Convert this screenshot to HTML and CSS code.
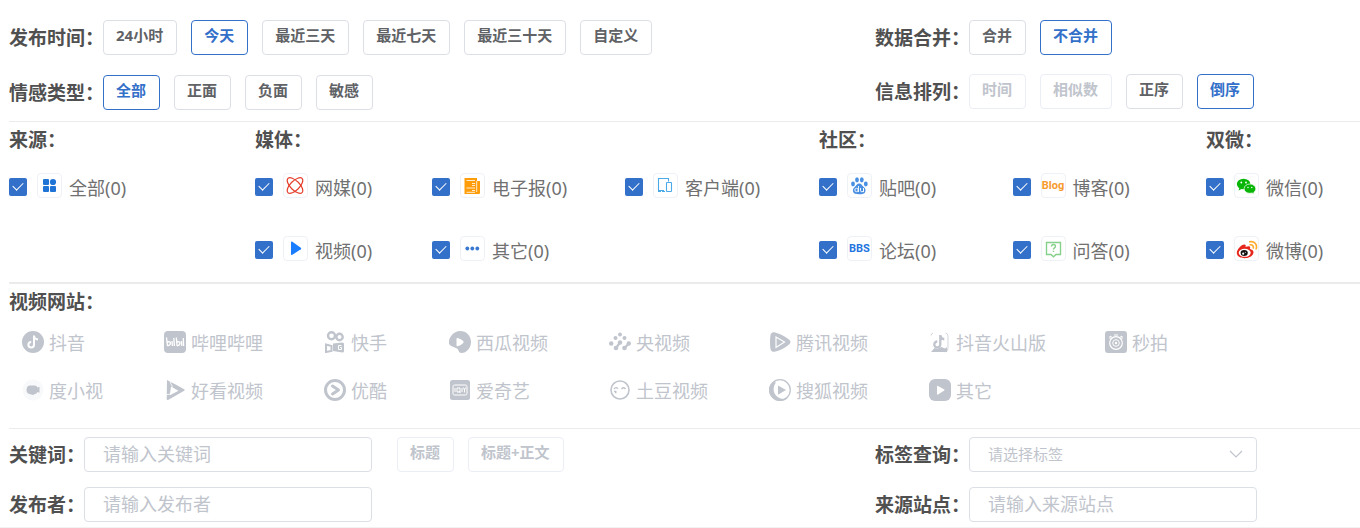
FILE: index.html
```html
<!DOCTYPE html>
<html lang="zh-CN">
<head>
  <meta charset="utf-8">
  <title>信息筛选</title>
  <link rel="stylesheet" href="styles.css">
</head>
<body>
  <form class="filter">

    <div class="section top">
      <div class="col col-left">
        <div class="row">
          <span class="title">发布时间：</span>
          <div class="btns">
            <button type="button" class="btn">24小时</button>
            <button type="button" class="btn active">今天</button>
            <button type="button" class="btn">最近三天</button>
            <button type="button" class="btn">最近七天</button>
            <button type="button" class="btn">最近三十天</button>
            <button type="button" class="btn">自定义</button>
          </div>
        </div>
        <div class="row">
          <span class="title">情感类型：</span>
          <div class="btns">
            <button type="button" class="btn active">全部</button>
            <button type="button" class="btn">正面</button>
            <button type="button" class="btn">负面</button>
            <button type="button" class="btn">敏感</button>
          </div>
        </div>
      </div>
      <div class="col col-right">
        <div class="row">
          <span class="title">数据合并：</span>
          <div class="btns">
            <button type="button" class="btn">合并</button>
            <button type="button" class="btn active">不合并</button>
          </div>
        </div>
        <div class="row">
          <span class="title">信息排列：</span>
          <div class="btns">
            <button type="button" class="btn" disabled>时间</button>
            <button type="button" class="btn" disabled>相似数</button>
            <button type="button" class="btn">正序</button>
            <button type="button" class="btn active">倒序</button>
          </div>
        </div>
      </div>
    </div>

    <div class="section sources">
      <div class="group">
        <h3 class="title">来源：</h3>
        <div class="items">
          <label class="item"><input type="checkbox" checked>
            <svg class="icon" viewBox="1 1 23 23"><g fill="#1f74d6"><rect x="6" y="6" width="6" height="6" rx="1"/><circle cx="16" cy="9" r="3.1"/><rect x="6" y="13" width="6" height="6" rx="1"/><rect x="13" y="13" width="6" height="6" rx="1"/></g></svg>
            <span>全部(0)</span></label>
        </div>
      </div>

      <div class="group media">
        <h3 class="title">媒体：</h3>
        <div class="items">
          <label class="item"><input type="checkbox" checked>
            <svg class="icon" viewBox="1 1 23 23"><g fill="none" stroke="#e6402f" stroke-width="1.2"><ellipse cx="12" cy="12.500" rx="10" ry="4.600" transform="rotate(45 12 12.500)"/><ellipse cx="12" cy="12.500" rx="10" ry="4.600" transform="rotate(-45 12 12.500)"/></g></svg>
            <span>网媒(0)</span></label>
          <label class="item"><input type="checkbox" checked>
            <svg class="icon" viewBox="1 1 23 23"><path fill="#ff9c0a" d="M4.500 5H17v3h3v12q0 1-1 1H4.500z"/><g fill="none" stroke="#fff" stroke-width=".8"><path d="M6.500 7.500h8.500M12 10.500h3M12 12.500h3M6.500 15h8.500M12 17.500h3M6.500 19.300h8.500M16.700 8v11"/></g></svg>
            <span>电子报(0)</span></label>
          <label class="item"><input type="checkbox" checked>
            <svg class="icon" viewBox="1 1 23 23"><g fill="none" stroke="#4aa9e6" stroke-width="1.1"><path d="M15.500 8.500V5.500H5.500v12H11"/><rect x="13.500" y="9.500" width="5" height="9" rx=".6"/><path d="M5 18.500h3M9 18.500h3"/></g></svg>
            <span>客户端(0)</span></label>
          <label class="item"><input type="checkbox" checked>
            <svg class="icon" viewBox="1 1 23 23"><path fill="#1a7dff" d="M8 6.500q0-1.500 1.400-.8l8.400 6q1 .8 0 1.600l-8.400 5.500Q8 19.500 8 18z"/></svg>
            <span>视频(0)</span></label>
          <label class="item"><input type="checkbox" checked>
            <svg class="icon" viewBox="1 1 23 23"><g fill="#3a78d0"><circle cx="7.300" cy="12.500" r="1.900"/><circle cx="12.300" cy="12.500" r="1.900"/><circle cx="17.300" cy="12.500" r="1.900"/></g></svg>
            <span>其它(0)</span></label>
        </div>
      </div>

      <div class="group community">
        <h3 class="title">社区：</h3>
        <div class="items">
          <label class="item"><input type="checkbox" checked>
            <svg class="icon" viewBox="1 1 23 23"><g fill="#4a90e2"><ellipse cx="6" cy="11" rx="1.900" ry="2.400"/><ellipse cx="10" cy="6.800" rx="1.900" ry="2.600"/><ellipse cx="14.800" cy="6.800" rx="1.900" ry="2.600"/><ellipse cx="18.800" cy="11" rx="1.900" ry="2.400"/><path d="M12.200 10.500c2.200 0 3 2.200 4.600 3.600 1.900 1.700 2 3.400 1.400 4.900-.8 2-2.800 2.200-6 2.200s-5.300-.3-6-2.200c-.6-1.500-.4-3.200 1.500-4.900 1.500-1.400 2.300-3.600 4.500-3.600z"/></g><g fill="none" stroke="#fff" stroke-width=".9"><circle cx="9.500" cy="17" r="1.700"/><path d="M11.500 13v6M13.500 15v2.500q0 1.300 1.400 1.300t1.600-1.300V15v4"/></g></svg>
            <span>贴吧(0)</span></label>
          <label class="item"><input type="checkbox" checked>
            <span class="icon word blog">Blog</span>
            <span>博客(0)</span></label>
          <label class="item"><input type="checkbox" checked>
            <span class="icon word bbs">BBS</span>
            <span>论坛(0)</span></label>
          <label class="item"><input type="checkbox" checked>
            <svg class="icon" viewBox="1 1 23 23"><g fill="none" stroke="#85d08a" stroke-width="1.400"><path d="M5.500 6.500h14v12H15l-2.500 2.200-2.500-2.200H5.500z"/><path d="M10.500 10.500q0-2 2-2t2 1.800q0 1-1 1.600-1 .6-1 1.600M12.500 14.700v1.400"/></g></svg>
            <span>问答(0)</span></label>
        </div>
      </div>

      <div class="group wechat">
        <h3 class="title">双微：</h3>
        <div class="items">
          <label class="item"><input type="checkbox" checked>
            <svg class="icon" viewBox="1 1 23 23"><path fill="#09b607" d="M4 13l1.300 2.200-.8 2.200 3-1.400z"/><ellipse cx="9.600" cy="11" rx="6.800" ry="5.200" fill="#09b607"/><path fill="#09b607" stroke="#fff" stroke-width=".7" d="M15.900 11c3.200 0 5.900 2.100 5.900 4.800 0 1.500-.8 2.700-2 3.500l.4 1.900-2-1.200c-.7.200-1.500.3-2.300.3-3.200 0-5.800-1.900-5.800-4.500s2.600-4.800 5.800-4.800z"/><g fill="#fff"><circle cx="7.300" cy="9.500" r=".9"/><circle cx="12" cy="9.500" r=".9"/><circle cx="14" cy="14.500" r=".7"/><circle cx="17.800" cy="14.500" r=".7"/></g></svg>
            <span>微信(0)</span></label>
          <label class="item"><input type="checkbox" checked>
            <svg class="icon" viewBox="1 1 23 23"><path fill="#e6251c" d="M10.600 8.600c1.500.2 1.200 1.500.9 2.400 2-.8 4.500-1.200 4.700.5.1.7-.3 1.300-.2 1.500 1.600.4 3.500 1.300 3.500 3.300 0 3.200-4.200 5.900-9 5.900-4.200 0-7.700-2.200-7.700-5.200 0-3.400 4.900-8.800 7.800-8.400z"/><ellipse cx="10.700" cy="16.800" rx="6" ry="4" fill="#fff"/><ellipse cx="10.200" cy="17" rx="3.600" ry="3.100" fill="#111"/><circle cx="9.200" cy="17.700" r="1.100" fill="#fff"/><circle cx="11.300" cy="16.200" r=".5" fill="#fff"/><g fill="none" stroke="#ffa927" stroke-width="1.600" stroke-linecap="round"><path d="M15.700 5.800c4.500-.9 7.800 2.500 6.500 7"/><path d="M16.200 8.800c2.200-.3 3.500 1.100 3.100 3.200"/></g></svg>
            <span>微博(0)</span></label>
        </div>
      </div>
    </div>

    <div class="section video">
      <h3 class="title">视频网站：</h3>
      <div class="sites">
        <button type="button" class="site" disabled><svg viewBox="0 0 22 22"><circle cx="11" cy="11" r="11" fill="currentColor"/><path fill="none" stroke="#fff" stroke-width="2" d="M12 4.500v9.300a2.800 2.800 0 1 1-2.800-2.800M12 5q.4 3.200 4 3.600"/></svg>抖音</button>
        <button type="button" class="site" disabled><svg viewBox="0 0 22 22"><rect width="22" height="22" rx="4" fill="currentColor"/><g fill="none" stroke="#fff" stroke-width="1.300"><path d="M2.500 6.500l1 8.500M3.300 11q3.400-.8 3.200 1.200-.4 2.300-3 2.600M8 10l.4 5M9.800 7l.6 8M12.300 6.500l.8 8.500M13 11q3.200-.8 3 1.200-.3 2.300-2.900 2.600M17.500 10l.3 5M19.300 7l.3 8"/></g></svg>哔哩哔哩</button>
        <button type="button" class="site" disabled><svg viewBox="0 0 22 22"><g fill="none" stroke="currentColor"><circle cx="7.500" cy="4.700" r="3.500" stroke-width="2.400"/><circle cx="15.500" cy="6" r="3.200" stroke-width="2.400"/><path d="M2 13.500l5.500 1.500v5L2 21z" stroke-width="2"/></g><path fill="currentColor" d="M9 12.500l9.500-1q1.500 0 1.500 1.500v7q0 1.500-1.500 1.500L9 20z"/><path fill="none" stroke="#fff" d="M17.500 14.500h-3v4h3v-2h-1.500"/></svg>快手</button>
        <button type="button" class="site" disabled><svg viewBox="0 0 22 22"><path fill="currentColor" d="M11 0c6.500 0 11 4.800 11 11 0 6-4.400 11-9.500 11-3.200 0-2.500-3-4.500-4.500-2.600-1.800-7.200-2-8-5C-.8 7.500 4 0 11 0z"/><path fill="#fff" d="M7.500 8q0-1.200 1.200-.9 3.500.8 5.500 3 .9 1 0 2-2 2.300-5.500 3.100-1.200.2-1.200-1z"/></svg>西瓜视频</button>
        <button type="button" class="site" disabled><svg viewBox="0 0 22 22"><g fill="currentColor"><circle cx="11" cy="3.500" r="2"/><circle cx="6.500" cy="7" r="2"/><circle cx="15.500" cy="7" r="2"/><circle cx="2.200" cy="12.500" r="2.200"/><circle cx="11" cy="11.500" r="2.200"/><circle cx="19.800" cy="12.500" r="2.200"/><circle cx="7" cy="17" r="2.300"/><circle cx="15.500" cy="17" r="2.300"/></g><path stroke="currentColor" stroke-width="2.200" d="M11 11.500L7 17M19.800 12.500L15.500 17"/></svg>央视频</button>
        <button type="button" class="site" disabled><svg viewBox="0 0 22 22"><path fill="currentColor" d="M1.500 4Q2 .8 5.500 1.200 13 3 20 8.500q3 2.500 0 5Q13 19.500 5.500 20.800 2 21 1.500 18q-1-7 0-14z"/><path fill="none" stroke="#fff" stroke-width="1.200" d="M7 6v10.500l8.500-5.500z"/></svg>腾讯视频</button>
        <button type="button" class="site" disabled><svg viewBox="0 0 22 22"><path fill="currentColor" d="M2 21l3.500-4 3 1 4-2 3.500 1.500 2-1.500V21z"/><path fill="none" stroke="currentColor" stroke-width="2.300" d="M11.300 4v9.500a3 3 0 1 1-3-3M11.300 4.500q.5 3.500 4 3.800"/><path fill="none" stroke="currentColor" stroke-width=".7" d="M2 4.500Q2 2.500 4 2.200M16.500 2q2.500.3 2.500 3v12q0 3.500-2.500 4"/></svg>抖音火山版</button>
        <button type="button" class="site" disabled><svg viewBox="0 0 22 22"><rect width="22" height="22" rx="3" fill="currentColor"/><g fill="none" stroke="#fff"><circle cx="11" cy="12" r="6.300" stroke-width="1.200"/><circle cx="11" cy="12" r="3.300"/><path d="M5 8V5l2.500 1.500M17 8V5l-2.500 1.500M9 4h4"/></g><circle cx="11" cy="12" r="1.200" fill="#fff"/></svg>秒拍</button>
        <button type="button" class="site" disabled><svg viewBox="0 0 22 22"><circle cx="11" cy="11" r="10.500" fill="#f8f9fa"/><path fill="currentColor" d="M7.500 6.500h5q2.500 0 3 2l2-.7v6l-2-.8q-.8 2-3 2.200l-2 .8-2-.8Q4.500 15 4.500 11q0-4 3-4.500z"/></svg>度小视</button>
        <button type="button" class="site" disabled><svg viewBox="0 0 22 22"><path fill="currentColor" fill-rule="evenodd" d="M3 1q7 3.500 17.500 9.500.8.600-.3 1.300L4.500 20.800q-1.800.8-1.800-1zm4 6.500l-1.200 8.700 8.700-4.400z"/><path stroke="#fff" stroke-width=".8" d="M2 15.800l5-.8M6 2.800l2.500 5"/></svg>好看视频</button>
        <button type="button" class="site" disabled><svg viewBox="0 0 22 22"><circle cx="11" cy="11" r="9.500" fill="none" stroke="currentColor" stroke-width="3"/><path fill="none" stroke="currentColor" stroke-width="3" stroke-linecap="round" stroke-linejoin="round" d="M8.500 7l6 4-6 4"/></svg>优酷</button>
        <button type="button" class="site" disabled><svg viewBox="0 0 22 22"><rect x="1" y="1" width="20" height="20" rx="2.500" fill="currentColor"/><g fill="none" stroke="#fff"><rect x="4" y="6" width="14" height="10" rx="1.500"/><path d="M6 9v4M8 9h3v4H8zM10 12l1.500 2M13 9v4M14.500 8.500l1 2.500 1-2.500M15.500 11v2.500"/></g></svg>爱奇艺</button>
        <button type="button" class="site" disabled><svg viewBox="0 0 22 22"><g fill="none" stroke="currentColor"><circle cx="11" cy="11" r="9" stroke-width="1.600"/><path stroke-width="1.300" d="M5 10q1.800-2.500 4-.3M12.500 10q2-2.500 4 0M5 12.500h2.500M6 13.500h1.500"/></g></svg>土豆视频</button>
        <button type="button" class="site" disabled><svg viewBox="0 0 22 22"><circle cx="11" cy="11" r="10.300" fill="none" stroke="currentColor" stroke-width="1.300"/><path fill="currentColor" d="M4 3C1 5 0 8 0 11c0 6 5 11 11 11 3 0 6-1 8-3-4 1.500-8 1-11-1.500C4 14 3.500 8 7 3.500z"/><path fill="currentColor" d="M9 6.500l8 4.500-8 4.800z"/></svg>搜狐视频</button>
        <button type="button" class="site" disabled><svg viewBox="0 0 22 22"><rect width="22" height="22" rx="6" fill="currentColor"/><path fill="#fff" d="M8 7.500q0-1 1-.5l6.300 3.500q.7.500 0 1L9 15.500q-1 .5-1-.5z"/></svg>其它</button>
      </div>
    </div>

    <div class="section search">
      <div class="col">
        <div class="row">
          <label class="title short" for="keyword">关键词：</label>
          <input type="text" id="keyword" class="field" placeholder="请输入关键词">
          <div class="btns after-field">
            <button type="button" class="btn" disabled>标题</button>
            <button type="button" class="btn" disabled>标题+正文</button>
          </div>
        </div>
        <div class="row">
          <label class="title short" for="author">发布者：</label>
          <input type="text" id="author" class="field" placeholder="请输入发布者">
        </div>
      </div>
      <div class="col">
        <div class="row">
          <label class="title" for="tag">标签查询：</label>
          <div class="select">
            <select id="tag" class="field">
              <option>请选择标签</option>
            </select>
            <svg class="arrow" viewBox="0 0 14 8"><path d="M1 1l6 6 6-6" fill="none" stroke="#c0c4cc" stroke-width="1.200"/></svg>
          </div>
        </div>
        <div class="row">
          <label class="title" for="website">来源站点：</label>
          <input type="text" id="website" class="field" placeholder="请输入来源站点">
        </div>
      </div>
    </div>

  </form>
</body>
</html>
```
FILE: styles.css
```css
* {
  box-sizing: border-box;
}
body {
  margin: 0;
  background-color: #fff;
  color: #707070;
  font-family: "Noto Sans", "Noto Sans CJK SC", sans-serif;
  font-size: 18px;
}
button, input, select {
  font-family: inherit;
}
.filter {
  padding-left: 9px;
  border-bottom: 1px solid #f2f2f2;
}
.section {
  border-bottom: 1px solid #ebebeb;
}
.title {
  margin: 0;
  color: #505050;
  font-size: 19px;
  font-weight: bold;
  line-height: 34px;
  white-space: nowrap;
}
h3.title {
  height: 34px;
  line-height: 36px;
}

/* rows of buttons */
.top, .search {
  display: grid;
  grid-template-columns: 866fr 485fr;
}
.top {
  padding: 20px 0 11px;
}
.col {
  display: flex;
  flex-direction: column;
  gap: 15px;
}
.col-left {
  gap: 20px;
}
.col-right {
  gap: 19px;
}
.row {
  display: flex;
  align-items: center;
  height: 35px;
}
.row .title {
  flex: 0 0 94px;
  min-width: 0;
}
.row .short {
  flex-basis: 75px;
}
.btns {
  display: flex;
  gap: 14px;
}
.btn {
  height: 35px;
  padding: 0 13px 6px 12px;
  border: 1px solid #dcdfe6;
  border-radius: 4px;
  background-color: #fff;
  color: #606266;
  font-size: 15px;
  font-weight: bold;
  line-height: 20px;
  white-space: nowrap;
  cursor: pointer;
}
.btn.active {
  border-color: #3370c9;
  color: #3370c9;
}
.btn:disabled {
  border-color: #ebeef5;
  color: #c0c4cc;
  cursor: not-allowed;
}

/* sources */
.sources {
  display: grid;
  grid-template-columns: 246fr 564fr 387fr 154fr;
  border-bottom-width: 2px;
}
.items {
  display: grid;
}
.media .items {
  grid-template-columns: 177fr 193fr 194fr;
}
.community .items {
  grid-template-columns: 1fr 1fr;
}
.item {
  display: flex;
  align-items: center;
  height: 63px;
  padding-bottom: 2px;
  white-space: nowrap;
}
.item input {
  display: grid;
  place-items: center;
  appearance: none;
  width: 18px;
  height: 18px;
  margin: 0 10px 0 0;
  border-radius: 2px;
  background-color: #3370c9;
}
.item input:checked::after {
  content: "";
  width: 5px;
  height: 9px;
  margin-bottom: 3px;
  border: solid #fff;
  border-width: 0 1px 1px 0;
  transform: rotate(45deg);
}
.icon {
  width: 25px;
  height: 25px;
  margin: 0 7px 2px 0;
  border: 1px solid #eef1f6;
  border-radius: 4px;
}
.word {
  display: flex;
  align-items: center;
  justify-content: center;
  font-family: Roboto, sans-serif;
  font-size: 11px;
  font-weight: bold;
}
.blog {
  color: #f79a2e;
}
.bbs {
  color: #1f74e0;
}

/* video sites */
.video {
  padding-bottom: 14px;
}
.sites {
  display: grid;
  grid-template-columns: 142fr 160fr 125fr 160fr 160fr 160fr 176fr 255fr;
  padding-left: 13px;
}
.site {
  display: flex;
  align-items: center;
  gap: 5px;
  height: 48px;
  padding: 0;
  border: none;
  background: none;
  color: #c0c4cc;
  font-size: 18px;
  white-space: nowrap;
}
.site svg {
  width: 22px;
  height: 22px;
}

/* inputs */
.search {
  padding: 8px 0 5px;
  border-bottom: none;
}
.field {
  width: 288px;
  height: 35px;
  padding: 0 18px 2px;
  border: 1px solid #dcdfe6;
  border-radius: 4px;
  background-color: #fff;
  font-size: 18px;
}
.field::placeholder {
  color: #c0c4cc;
}
.after-field {
  margin-left: 25px;
}
.select {
  position: relative;
}
.select .field {
  display: block;
  appearance: none;
  color: #c0c4cc;
  font-size: 15px;
}
.arrow {
  position: absolute;
  top: 13px;
  right: 14px;
  width: 14px;
  height: 8px;
  pointer-events: none;
}
```
